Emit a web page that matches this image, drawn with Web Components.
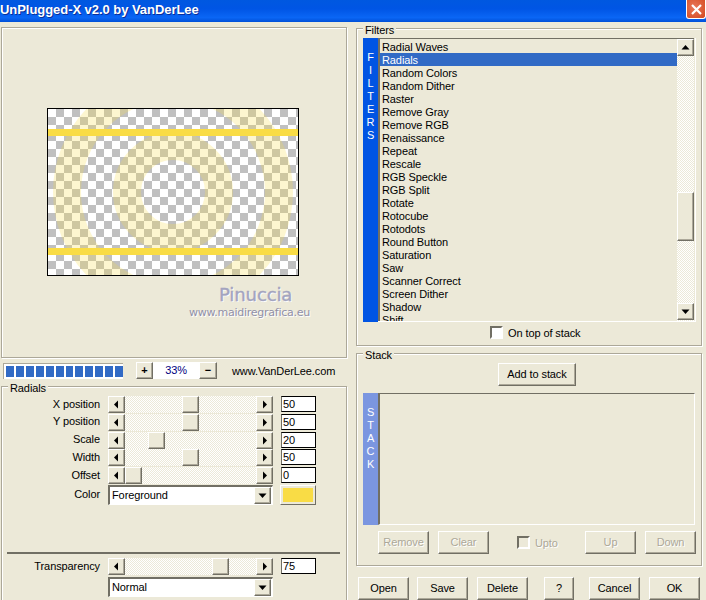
<!DOCTYPE html>
<html>
<head>
<meta charset="utf-8">
<title>UnPlugged-X</title>
<style>
  html, body { margin: 0; height: 600px; overflow: hidden; background: #ece9d8; }
  body { font: 11px "Liberation Sans", Arial, sans-serif; letter-spacing: -.1px; color: #000; }
</style>
</head>
<body>
<filter-dialog></filter-dialog>
<script>
// shared win9x style bevels
const BEVEL = 'border:1px solid;border-color:#fff #716f64 #716f64 #fff;box-shadow:inset -1px -1px 0 #aca899;background:#ece9d8;';
const FONT = 'font:11px "Liberation Sans", Arial, sans-serif;letter-spacing:-.1px;';
const DITHER = 'background:repeating-conic-gradient(#fff 0 25%, #ece9d8 0 50%) 0 0 / 2px 2px;';

customElements.define('win-titlebar', class WinTitlebar extends HTMLElement {
  constructor() {
    super();
    this.attachShadow({mode: 'open'});
    this.shadowRoot.innerHTML = `<style>
    :host {
      display: flex;
      height: 22px;
      justify-content: space-between;
      background: linear-gradient(#0058e0 0, #0055e5 40%, #0a66f5 80%, #0050d8 100%);
      color: #fff;
      font: bold 13px/19px "Liberation Sans", Arial, sans-serif;
      letter-spacing: -.05px;
      text-shadow: 1px 1px 0 #0a2f9a;
    }
    .close {
      width: 20px;
      height: 19px;
      box-sizing: border-box;
      border: 1px solid #fff;
      border-top: 0;
      border-radius: 0 0 3px 3px;
      background: radial-gradient(circle at 40% 40%, #e8785a, #d4481f);
      display: flex;
      align-items: center;
      justify-content: center;
    }
    </style>
    <span><slot></slot></span>
    <span class="close"><svg width="13" height="13" viewBox="0 0 13 13"><path d="M2 2l9 9M11 2l-9 9" stroke="#fff" stroke-width="2.2"/></svg></span>`;
  }
});

customElements.define('group-box', class GroupBox extends HTMLElement {
  static get observedAttributes() { return ['label']; }
  constructor() {
    super();
    this.attachShadow({mode: 'open'});
    this.shadowRoot.innerHTML = `<style>
    :host {
      display: block;
      box-sizing: border-box;
      position: relative;
      border: 1px solid #aca899;
      box-shadow: inset 1px 1px 0 #fff, 1px 1px 0 #fff;
    }
    .label {
      position: absolute;
      left: 6px;
      top: -6px;
      padding: 0 2px;
      background: #ece9d8;
      ${FONT}
      line-height: 14px;
    }
    </style>
    <span class="label"></span><slot></slot>`;
  }
  attributeChangedCallback(n, o, v) {
    this.shadowRoot.querySelector('.label').textContent = v;
  }
});

customElements.define('win-button', class WinButton extends HTMLElement {
  constructor() {
    super();
    this.attachShadow({mode: 'open'});
    this.shadowRoot.innerHTML = `<style>
    :host {
      display: flex;
      box-sizing: border-box;
      align-items: center;
      justify-content: center;
      height: 23px;
      padding-bottom: 2px;
      ${BEVEL}
      ${FONT}
    }
    :host([disabled]) {
      color: #aca899;
      text-shadow: 1px 1px 0 #fff;
    }
    </style><slot></slot>`;
  }
});

customElements.define('scroll-arrow', class ScrollArrow extends HTMLElement {
  constructor() {
    super();
    this.attachShadow({mode: 'open'});
    const d = {left: 'M6 .5v8L2 4.5z', right: 'M3 .5v8l4-4z', up: 'M.5 6.5h8L4.5 2z', down: 'M.5 2.5h8L4.5 7z'}[this.getAttribute('dir')];
    this.shadowRoot.innerHTML = `<style>
    :host {
      display: flex;
      box-sizing: border-box;
      flex: none;
      width: 17px;
      height: 17px;
      align-items: center;
      justify-content: center;
      ${BEVEL}
    }
    svg { display: block; }
    </style><svg width="9" height="9" viewBox="0 0 9 9"><path d="${d}" fill="#000"/></svg>`;
  }
});

customElements.define('slider-row', class SliderRow extends HTMLElement {
  constructor() {
    super();
    this.attachShadow({mode: 'open'});
    const label = this.getAttribute('label');
    const pos = +this.getAttribute('pos');
    this.shadowRoot.innerHTML = `<style>
    :host {
      display: flex;
      align-items: center;
      ${FONT}
    }
    .name {
      width: 106px;
      flex: none;
      text-align: right;
      padding-right: 8px;
      margin-bottom: 2px;
      box-sizing: border-box;
    }
    .track {
      display: flex;
      width: 165px;
      height: 17px;
      flex: none;
      ${DITHER}
    }
    .gap { width: ${pos}px; flex: none; }
    .thumb { width: 17px; height: 17px; box-sizing: border-box; flex: none; ${BEVEL} }
    .grow { flex: 1; }
    .val {
      box-sizing: border-box;
      flex: none;
      align-self: flex-start;
      margin-left: 8px;
      width: 35px;
      height: 16px;
      padding-left: 1px;
      background: #fff;
      border: 1px solid;
      border-color: #000 #000 #000 #716f64;
      line-height: 14px;
    }
    </style>
    <span class="name">${label}</span>
    <span class="track">
      <scroll-arrow dir="left"></scroll-arrow>
      <span class="gap"></span><span class="thumb"></span><span class="grow"></span>
      <scroll-arrow dir="right"></scroll-arrow>
    </span>
    <span class="val">${this.getAttribute('value')}</span>`;
  }
});

customElements.define('combo-box', class ComboBox extends HTMLElement {
  constructor() {
    super();
    this.attachShadow({mode: 'open'});
    this.shadowRoot.innerHTML = `<style>
    :host {
      display: flex;
      box-sizing: border-box;
      width: 165px;
      height: 20px;
      align-items: center;
      justify-content: space-between;
      background: #fff;
      border: solid;
      border-width: 2px 1px 1px 2px;
      border-color: #716f64 #fff #fff #716f64;
      ${FONT}
      padding: 0 1px 0 2px;
    }
    .t { margin-bottom: 2px; }
    </style><span class="t"><slot></slot></span><scroll-arrow dir="down"></scroll-arrow>`;
  }
});

customElements.define('preview-pane', class PreviewPane extends HTMLElement {
  constructor() {
    super();
    this.attachShadow({mode: 'open'});
    this.shadowRoot.innerHTML = `<style>
    :host {
      display: block;
      box-sizing: border-box;
      height: 331px;
      margin-left: 1px;
      padding: 80px 0 0 45px;
      border: 1px solid #aca899;
      box-shadow: inset 1px 1px 0 #fff, 1px 1px 0 #fff;
    }
    svg { display: block; }
    .mark {
      display: flex;
      flex-direction: column;
      align-items: flex-start;
      margin-top: 8px;
      text-shadow: 1px 1px 0 #fff;
    }
    .mark b { margin-left: 172px; font: 18px/22px "DejaVu Sans", sans-serif; color: #a3a4bf; -webkit-text-stroke: .4px #a3a4bf; }
    .mark i { margin-left: 142px; font: 11px/14px "DejaVu Sans", sans-serif; letter-spacing: -.25px; color: #9090a8; }
    </style>
    <svg width="252" height="168" viewBox="0 0 252 168">
      <defs>
        <pattern id="chk" width="16" height="16" patternUnits="userSpaceOnUse" x="1" y="1">
          <rect width="16" height="16" fill="#fff"/>
          <rect x="8" width="8" height="8" fill="#c0c0c0"/>
          <rect y="8" width="8" height="8" fill="#c0c0c0"/>
        </pattern>
        <clipPath id="pic"><rect x="1" y="1" width="250" height="166"/></clipPath>
      </defs>
      <rect x=".5" y=".5" width="251" height="167" fill="url(#chk)" stroke="#000"/>
      <g clip-path="url(#pic)">
        <circle cx="126" cy="84" r="46" fill="none" stroke="#f9dc45" stroke-opacity=".25" stroke-width="28"/>
        <circle cx="126" cy="84" r="106" fill="none" stroke="#f9dc45" stroke-opacity=".25" stroke-width="28"/>
        <rect x="1" y="21" width="250" height="7" fill="#f9dc45"/>
        <rect x="1" y="140" width="250" height="7" fill="#f9dc45"/>
      </g>
    </svg>
    <div class="mark"><b>Pinuccia</b><i>www.maidiregrafica.eu</i></div>`;
  }
});

customElements.define('zoom-bar', class ZoomBar extends HTMLElement {
  constructor() {
    super();
    this.attachShadow({mode: 'open'});
    const cells = Array(12).fill('<i></i>').join('');
    this.shadowRoot.innerHTML = `<style>
    :host {
      display: flex;
      align-items: center;
      height: 19px;
      padding-left: 3px;
      ${FONT}
    }
    .prog {
      display: flex;
      gap: 2px;
      box-sizing: border-box;
      width: 120px;
      height: 16px;
      padding: 2px 0 2px 2px;
      background: #fff;
      border: 1px solid #aca899;
      border-width: 1px 0 0 1px;
    }
    i { width: 8px; background: #316ac5; }
    win-button { width: 17px; height: 17px; font-weight: bold; }
    .pct {
      width: 46px;
      height: 17px;
      line-height: 17px;
      text-align: center;
      background: #fff;
      color: #000080;
    }
    .url { margin-left: 15px; }
    </style>
    <span class="prog">${cells}</span>
    <win-button style="margin-left:13px">+</win-button>
    <span class="pct">33%</span>
    <win-button style="width:18px">−</win-button>
    <span class="url">www.VanDerLee.com</span>`;
  }
});

customElements.define('filter-list', class FilterList extends HTMLElement {
  constructor() {
    super();
    this.attachShadow({mode: 'open'});
    const names = ['Radial Waves','Radials','Random Colors','Random Dither','Raster','Remove Gray','Remove RGB','Renaissance','Repeat','Rescale','RGB Speckle','RGB Split','Rotate','Rotocube','Rotodots','Round Button','Saturation','Saw','Scanner Correct','Screen Dither','Shadow','Shift'];
    const rows = names.map(n => `<div class="row${n === 'Radials' ? ' sel' : ''}">${n}</div>`).join('');
    this.shadowRoot.innerHTML = `<style>
    :host {
      display: flex;
      box-sizing: border-box;
      height: 284px;
      padding-right: 1px;
      border-right: 1px solid #fff;
      border-bottom: 1px solid #fff;
      ${FONT}
    }
    .side {
      width: 15px;
      height: 284px;
      flex: none;
      background: #0054e3;
      color: #fff;
      text-align: center;
      line-height: 13px;
      padding-top: 13px;
      box-sizing: border-box;
    }
    .list {
      flex: 1;
      overflow: hidden;
      border-top: 1px solid #716f64;
      border-left: 2px solid #716f64;
      padding: 1px 0 0 0;
    }
    .row { height: 13px; line-height: 15px; padding-left: 2px; }
    .sel { background: #316ac5; color: #fff; }
    .bar {
      display: flex;
      flex-direction: column;
      box-sizing: border-box;
      width: 17px;
      flex: none;
      border-top: 1px solid #716f64;
      padding-bottom: 1px;
      ${DITHER}
    }
    .thumb { height: 49px; margin-top: 136px; box-sizing: border-box; ${BEVEL} }
    .grow { flex: 1; }
    </style>
    <div class="side">F<br>I<br>L<br>T<br>E<br>R<br>S</div>
    <div class="list">${rows}</div>
    <div class="bar"><scroll-arrow dir="up"></scroll-arrow><div class="thumb"></div><div class="grow"></div><scroll-arrow dir="down"></scroll-arrow></div>`;
  }
});

customElements.define('stack-list', class StackList extends HTMLElement {
  constructor() {
    super();
    this.attachShadow({mode: 'open'});
    this.shadowRoot.innerHTML = `<style>
    :host {
      display: flex;
      box-sizing: border-box;
      height: 132px;
      ${FONT}
    }
    .side {
      width: 15px;
      flex: none;
      background: #7b96e0;
      color: #fff;
      text-align: center;
      line-height: 13px;
      padding-top: 13px;
      box-sizing: border-box;
    }
    .list {
      flex: 1;
      margin-right: 1px;
      border: solid;
      border-width: 1px 1px 1px 2px;
      border-color: #716f64 #fff #fff #716f64;
    }
    </style>
    <div class="side">S<br>T<br>A<br>C<br>K</div><div class="list"></div>`;
  }
});

customElements.define('check-box', class CheckBox extends HTMLElement {
  constructor() {
    super();
    this.attachShadow({mode: 'open'});
    this.shadowRoot.innerHTML = `<style>
    :host {
      display: inline-flex;
      align-items: center;
      gap: 5px;
      ${FONT}
    }
    .box {
      width: 13px;
      height: 13px;
      box-sizing: border-box;
      background: #fff;
      border: 2px solid;
      border-color: #716f64 #fff #fff #716f64;
    }
    :host([disabled]) { color: #aca899; text-shadow: 1px 1px 0 #fff; }
    :host([disabled]) .box { background: #ece9d8; }
    </style><span class="box"></span><slot></slot>`;
  }
});

customElements.define('filter-dialog', class FilterDialog extends HTMLElement {
  constructor() {
    super();
    this.attachShadow({mode: 'open'});
    this.shadowRoot.innerHTML = `<style>
    :host {
      display: block;
      width: 706px;
      height: 600px;
      overflow: hidden;
      background: #ece9d8;
    }
    .main {
      display: grid;
      grid-template-columns: 347px 346px;
      column-gap: 9px;
      margin-top: 5px;
    }
    .left, .right { display: flex; flex-direction: column; }
    zoom-bar { margin-top: 3px; }
    .radials {
      margin: 6px 0 0 1px;
      height: 240px;
      padding: 9px 0 0 0;
    }
    .rows { display: grid; row-gap: .75px; }
    .colorrow {
      display: flex;
      align-items: center;
      margin-top: 1px;
      ${FONT}
    }
    .colorrow .name { width: 98px; text-align: right; margin: 0 8px 2px 0; }
    .swatch {
      box-sizing: content-box;
      width: 30px;
      height: 14px;
      margin-left: 7px;
      padding: 2px;
      border: 1px solid;
      border-color: #fff #716f64 #716f64 #fff;
      background: #f9dc45 content-box;
    }
    .rule { height: 2px; background: #716f64; margin: 47px 0 4px 5px; width: 333px; }
    .normal { margin: 2px 0 0 106px; }
    .filters { height: 318px; margin-top: 1px; padding: 9px 5px 0 6px; }
    .ontop { margin: 4px 0 0 127px; }
    .stack { height: 213px; margin-top: 7px; padding: 9px 5px 0 6px; }
    .add { width: 78px; margin: 0 0 7px 135px; }
    .stackbtns { display: flex; align-items: center; margin-top: 6px; padding-left: 15px; }
    .stackbtns win-button { width: 51px; flex: none; }
    .stackbtns check-box { width: 68px; flex: none; margin-left: 28px; }
    .actions { display: flex; margin: 11px 0 0 2px; }
    .actions win-button { width: 51px; flex: none; }
    </style>
    <win-titlebar>UnPlugged-X v2.0 by VanDerLee</win-titlebar>
    <div class="main">
      <div class="left">
        <preview-pane></preview-pane>
        <zoom-bar></zoom-bar>
        <group-box class="radials" label="Radials">
          <div class="rows">
            <slider-row label="X position" pos="57" value="50"></slider-row>
            <slider-row label="Y position" pos="57" value="50"></slider-row>
            <slider-row label="Scale" pos="23" value="20"></slider-row>
            <slider-row label="Width" pos="57" value="50"></slider-row>
            <slider-row label="Offset" pos="0" value="0"></slider-row>
          </div>
          <div class="colorrow"><span class="name">Color</span><combo-box>Foreground</combo-box><span class="swatch"></span></div>
          <div class="rule"></div>
          <slider-row label="Transparency" pos="87" value="75"></slider-row>
          <combo-box class="normal">Normal</combo-box>
        </group-box>
      </div>
      <div class="right">
        <group-box class="filters" label="Filters">
          <filter-list></filter-list>
          <div class="ontop"><check-box>On top of stack</check-box></div>
        </group-box>
        <group-box class="stack" label="Stack">
          <win-button class="add">Add to stack</win-button>
          <stack-list></stack-list>
          <div class="stackbtns">
            <win-button disabled>Remove</win-button>
            <win-button disabled style="margin-left:9px">Clear</win-button>
            <check-box disabled>Upto</check-box>
            <win-button disabled>Up</win-button>
            <win-button disabled style="margin-left:9px">Down</win-button>
          </div>
        </group-box>
        <div class="actions">
          <win-button>Open</win-button>
          <win-button style="margin-left:8px">Save</win-button>
          <win-button style="margin-left:9px">Delete</win-button>
          <win-button style="margin-left:16px;width:30px">?</win-button>
          <win-button style="margin-left:15px">Cancel</win-button>
          <win-button style="margin-left:9px">OK</win-button>
        </div>
      </div>
    </div>`;
  }
});
</script>
</body>
</html>
